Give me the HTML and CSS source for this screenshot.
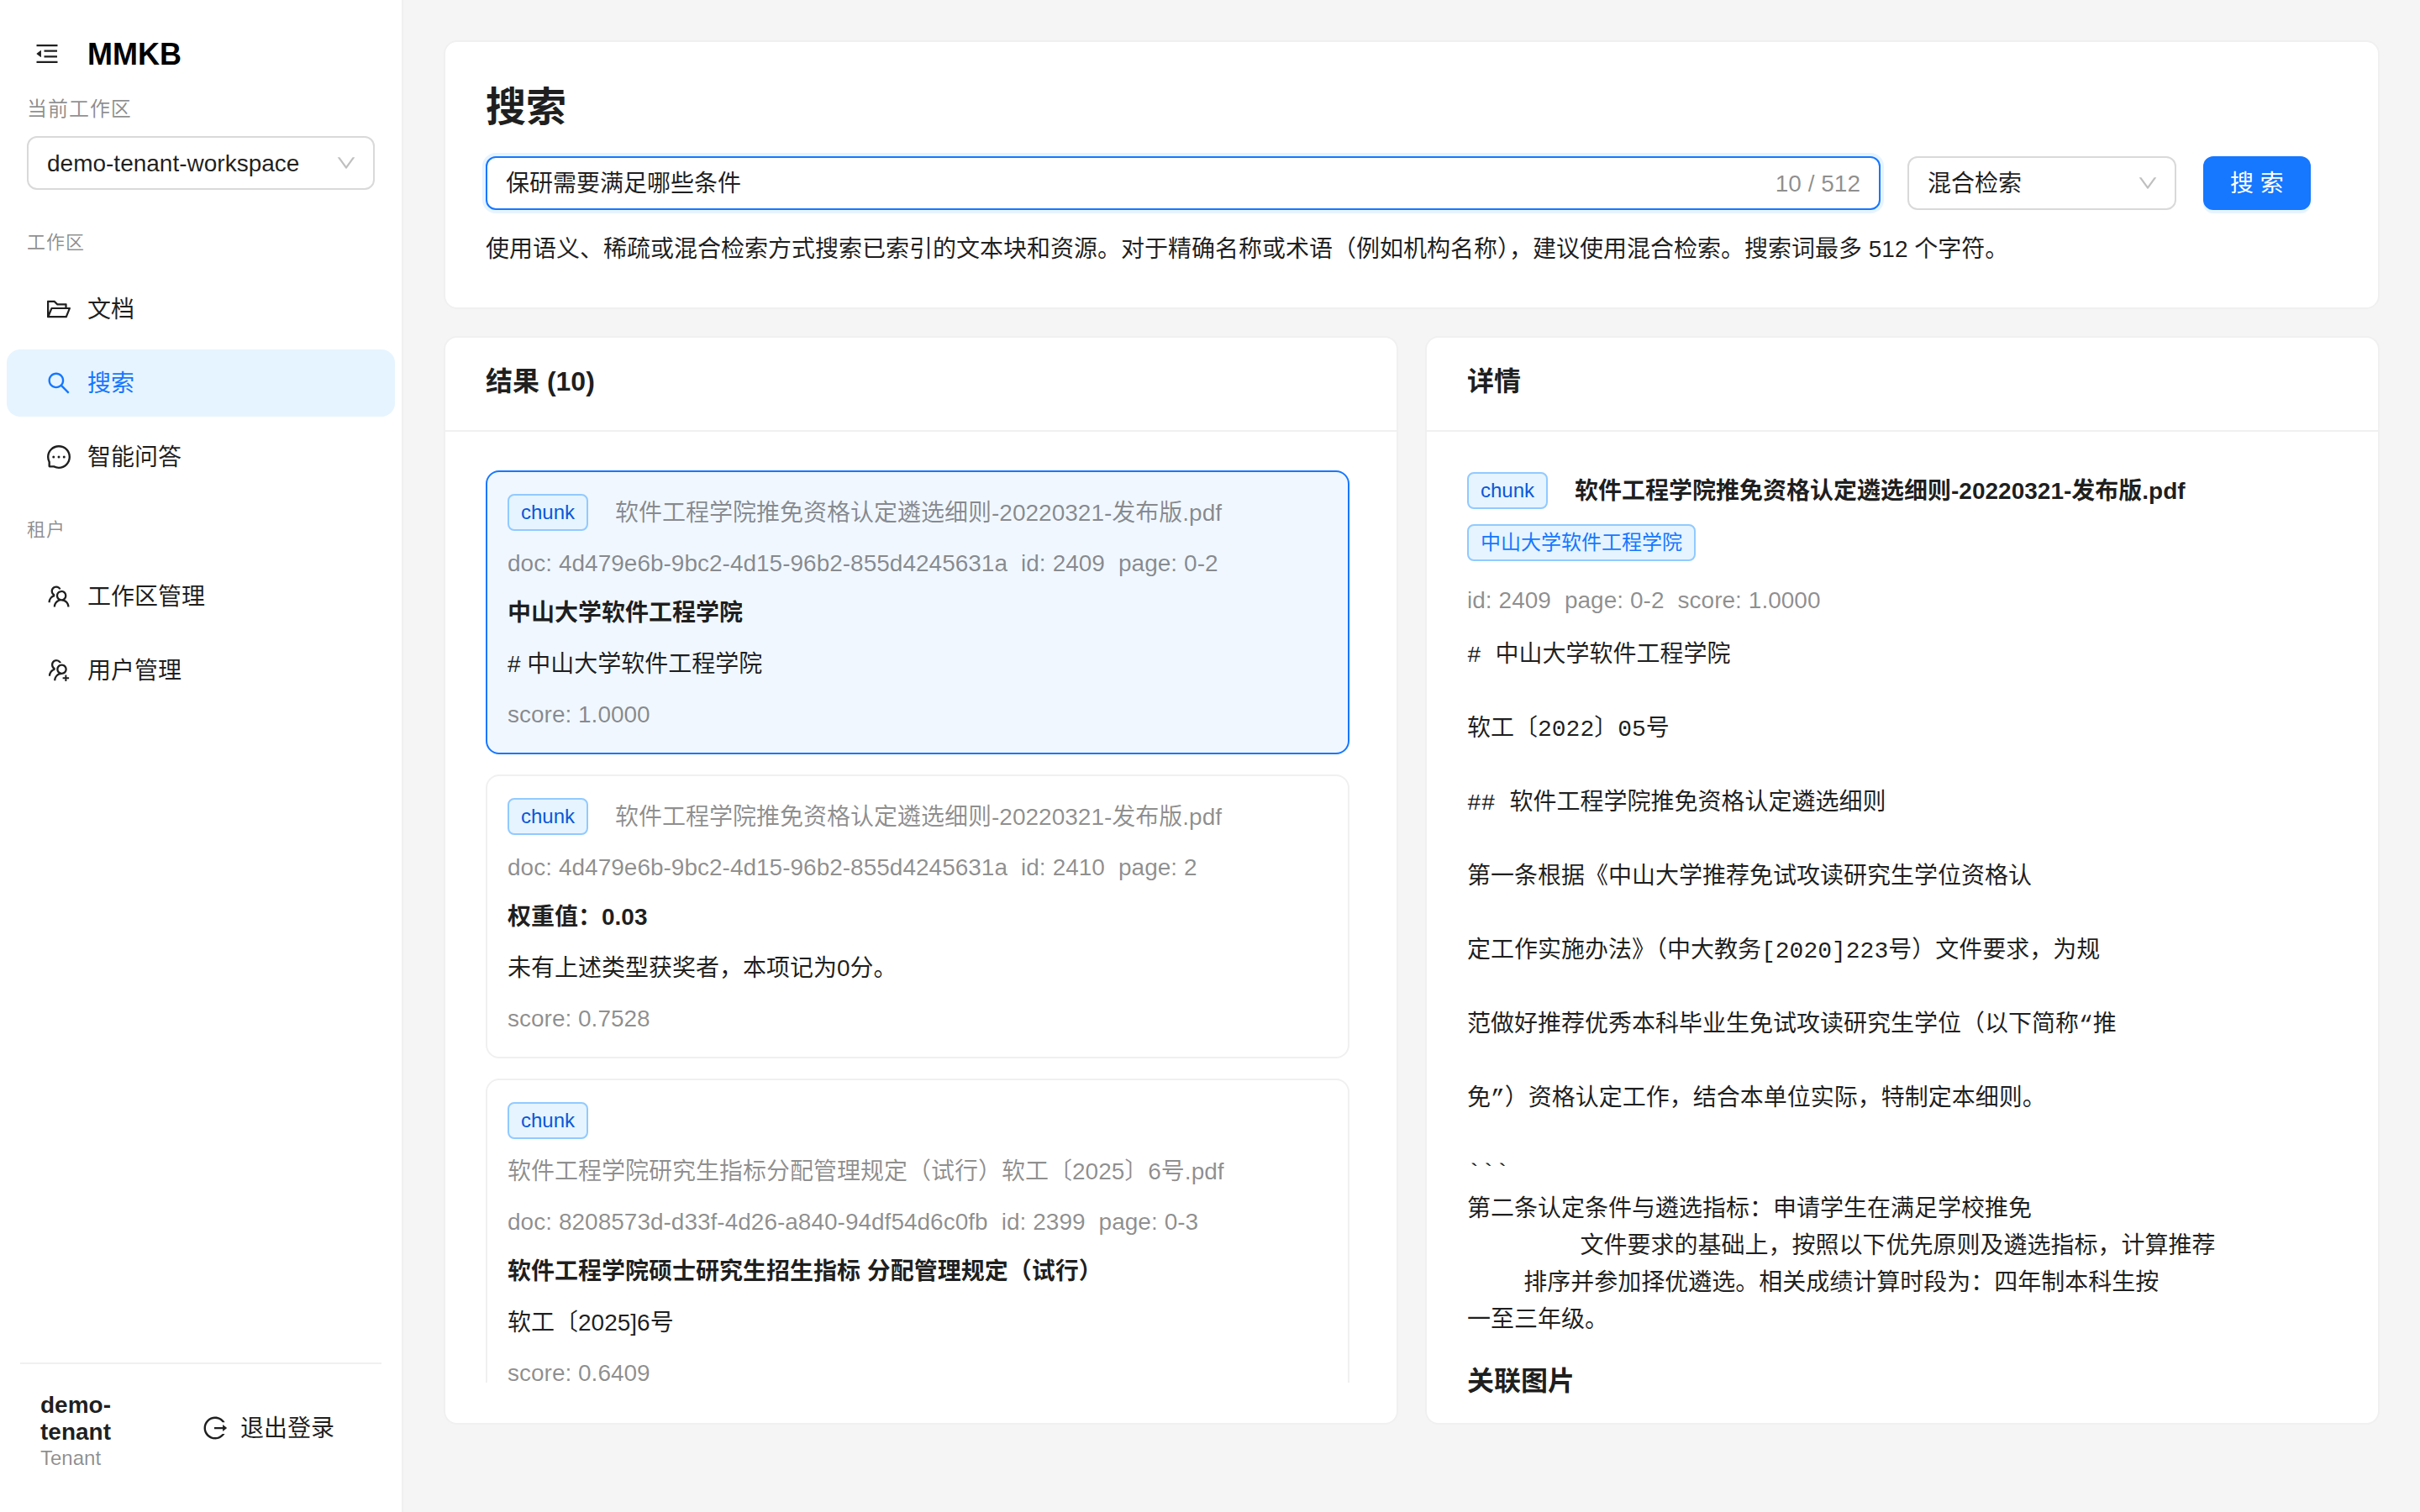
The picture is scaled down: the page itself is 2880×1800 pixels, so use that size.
FILE: index.html
```html
<!DOCTYPE html>
<html lang="zh-CN">
<head>
<meta charset="utf-8">
<title>MMKB</title>
<link rel="stylesheet" href="styles.css">
</head>
<body>
<div class="app">
  <aside class="sidebar">
    <div class="brand">
      <span class="fold"><svg class="icon" viewBox="64 64 896 896"><path d="M408 442h480c4.4 0 8-3.6 8-8v-56c0-4.4-3.6-8-8-8H408c-4.4 0-8 3.6-8 8v56c0 4.4 3.6 8 8 8zm-8 204c0 4.4 3.6 8 8 8h480c4.4 0 8-3.6 8-8v-56c0-4.4-3.6-8-8-8H408c-4.4 0-8 3.6-8 8v56zm504-486H120c-4.4 0-8 3.6-8 8v56c0 4.4 3.6 8 8 8h784c4.4 0 8-3.6 8-8v-56c0-4.4-3.6-8-8-8zm0 632H120c-4.4 0-8 3.6-8 8v56c0 4.4 3.6 8 8 8h784c4.4 0 8-3.6 8-8v-56c0-4.4-3.6-8-8-8zM115.4 518.9L271.7 642c5.8 4.6 14.4.5 14.4-6.9V388.9c0-7.4-8.5-11.5-14.4-6.9L115.4 505.1a8.74 8.74 0 0 0 0 13.8z"/></svg></span>
      <span class="brand-name">MMKB</span>
    </div>
    <div class="workspace">
      <div class="workspace-label">当前工作区</div>
      <div class="select">
        <span>demo-tenant-workspace</span>
        <svg class="arrow" viewBox="64 64 896 896"><path d="M884 256h-75c-5.1 0-9.9 2.5-12.9 6.6L512 654.2 227.9 262.6c-3-4.1-7.8-6.6-12.9-6.6h-75c-6.5 0-10.3 7.4-6.5 12.7l352.6 486.1c12.8 17.6 39 17.6 51.7 0l352.6-486.1c3.9-5.3.1-12.7-6.4-12.7z"/></svg>
      </div>
    </div>
    <nav class="menu">
      <div class="menu-group">工作区</div>
      <a class="menu-item"><svg class="icon" viewBox="64 64 896 896"><path d="M928 444H820V330.4c0-17.7-14.3-32-32-32H473L355.7 186.2a8.15 8.15 0 00-5.5-2.2H96c-17.7 0-32 14.3-32 32v592c0 17.7 14.3 32 32 32h698c13 0 24.8-7.9 29.7-20l134-332c1.5-3.8 2.3-7.9 2.3-12 0-17.7-14.3-32-32-32zM136 256h188.5l119.6 114.4H748V444H238c-13 0-24.8 7.9-29.7 20L136 643.2V256zm635.3 512H159l103.3-256h612.4L771.3 768z"/></svg><span>文档</span></a>
      <a class="menu-item active"><svg class="icon" viewBox="64 64 896 896"><path d="M909.6 854.5L649.9 594.8C690.2 542.7 712 479 712 412c0-80.2-31.3-155.4-87.9-212.1-56.6-56.7-132-87.9-212.1-87.9s-155.5 31.3-212.1 87.9C143.2 256.5 112 331.8 112 412c0 80.1 31.3 155.5 87.9 212.1C256.5 680.8 331.8 712 412 712c67 0 130.6-21.8 182.7-62l259.7 259.6a8.2 8.2 0 0011.6 0l43.6-43.5a8.2 8.2 0 000-11.6zM570.4 570.4C528 612.7 471.8 636 412 636s-116-23.3-158.4-65.6C211.3 528 188 471.8 188 412s23.3-116.1 65.6-158.4C296 211.3 352.2 188 412 188s116.1 23.2 158.4 65.6S636 352.2 636 412s-23.3 116.1-65.6 158.4z"/></svg><span>搜索</span></a>
      <a class="menu-item"><svg class="icon" viewBox="64 64 896 896"><path d="M464 512a48 48 0 1096 0 48 48 0 10-96 0zm200 0a48 48 0 1096 0 48 48 0 10-96 0zm-400 0a48 48 0 1096 0 48 48 0 10-96 0zm661.2-173.6c-22.6-53.7-55-101.9-96.3-143.3a444.35 444.35 0 00-143.3-96.3C630.6 75.7 572.2 64 512 64h-2c-60.6.3-119.3 12.3-174.5 35.9a445.35 445.35 0 00-142 96.5c-40.9 41.3-73 89.3-95.2 142.8-23 55.4-34.6 114.3-34.3 174.9A449.4 449.4 0 00112 714v152a46 46 0 0046 46h152.1A449.4 449.4 0 00510 960h2.1c59.9 0 118-11.6 172.7-34.3a444.48 444.48 0 00142.8-95.2c41.3-40.9 73.8-88.7 96.5-142 23.6-55.2 35.6-113.9 35.9-174.5.3-60.9-11.5-120-34.8-175.6zm-151.1 438C704 845.8 611 884 512 884h-1.7c-60.3-.3-120.2-15.3-173.1-43.5l-8.4-4.5H188V695.2l-4.5-8.4C155.3 633.9 140.3 574 140 513.7c-.4-99.7 37.7-193.3 107.6-263.8 69.8-70.5 163.1-109.5 262.8-109.9h1.7c50 0 98.5 9.7 144.2 28.9 44.6 18.7 84.6 45.6 119 80 34.3 34.3 61.3 74.4 80 119 19.4 46.2 29.1 95.2 28.9 145.8-.6 99.6-39.7 192.9-110.1 262.7z"/></svg><span>智能问答</span></a>
      <div class="menu-group">租户</div>
      <a class="menu-item"><svg class="icon" viewBox="64 64 896 896"><path d="M824.2 699.9a301.55 301.55 0 00-86.4-60.4C783.1 602.8 812 546.8 812 484c0-110.8-92.4-201.7-203.2-200-109.1 1.7-197 90.6-197 200 0 62.8 29 118.8 74.2 155.5a300.95 300.95 0 00-86.4 60.4C345 754.6 314 826.8 312 903.8a8 8 0 008 8.2h56c4.3 0 7.9-3.4 8-7.7 1.9-58 25.4-112.3 66.7-153.5A226.62 226.62 0 01612 684c60.9 0 118.2 23.7 161.3 66.8C814.6 792 838 846.3 840 904.3c.1 4.3 3.7 7.7 8 7.7h56a8 8 0 008-8.2c-2-77-33-149.2-87.8-203.9zM612 612c-34.2 0-66.4-13.3-90.5-37.5a126.86 126.86 0 01-37.5-91.8c.3-32.8 13.4-64.5 36.3-88 24-24.6 56.1-38.3 90.4-38.7 33.9-.3 66.8 12.9 91 36.6 24.8 24.3 38.4 56.8 38.4 91.4 0 34.2-13.3 66.3-37.5 90.5A127.3 127.3 0 01612 612zM361.5 510.4c-.9-8.7-1.4-17.5-1.4-26.4 0-15.9 1.5-31.4 4.3-46.5.7-3.6-1.2-7.3-4.5-8.8-13.6-6.1-26.1-14.5-36.9-25.1a127.54 127.54 0 01-38.7-95.4c.9-32.1 13.8-62.6 36.3-85.6 24.7-25.3 57.9-39.1 93.2-38.7 31.9.3 62.7 12.6 86 34.4 7.9 7.4 14.7 15.6 20.4 24.4 2 3.1 5.9 4.4 9.3 3.2 17.6-6.1 36.2-10.4 55.3-12.4 5.6-.6 8.8-6.6 6.3-11.6-32.5-64.3-98.9-108.7-175.7-109.9-110.9-1.7-203.3 89.2-203.3 199.9 0 62.8 28.9 118.8 74.2 155.5-31.8 14.7-61.1 35-86.5 60.4-54.8 54.7-85.8 126.9-87.8 204a8 8 0 008 8.2h56.1c4.3 0 7.9-3.4 8-7.7 1.9-58 25.4-112.3 66.7-153.5 29.4-29.4 65.4-49.8 104.7-59.7 3.9-1 6.5-4.7 6-8.7z"/></svg><span>工作区管理</span></a>
      <a class="menu-item"><svg class="icon" viewBox="64 64 896 896"><path d="M892 772h-80v-80c0-4.4-3.6-8-8-8h-48c-4.4 0-8 3.6-8 8v80h-80c-4.4 0-8 3.6-8 8v48c0 4.4 3.6 8 8 8h80v80c0 4.4 3.6 8 8 8h48c4.4 0 8-3.6 8-8v-80h80c4.4 0 8-3.6 8-8v-48c0-4.4-3.6-8-8-8zM373.5 498.4c-.9-8.7-1.4-17.5-1.4-26.4 0-15.9 1.5-31.4 4.3-46.5.7-3.6-1.2-7.3-4.5-8.8-13.6-6.1-26.1-14.5-36.9-25.1a127.54 127.54 0 01-38.7-95.4c.9-32.1 13.8-62.6 36.3-85.6 24.7-25.3 57.9-39.1 93.2-38.7 31.9.3 62.7 12.6 86 34.4 7.9 7.4 14.7 15.6 20.4 24.4 2 3.1 5.9 4.4 9.3 3.2 17.6-6.1 36.2-10.4 55.3-12.4 5.6-.6 8.8-6.6 6.3-11.6-32.5-64.3-98.9-108.7-175.7-109.9-110.8-1.7-203.2 89.2-203.2 200 0 62.8 28.9 118.8 74.2 155.5-31.8 14.7-61.1 35-86.5 60.4-54.8 54.7-85.8 126.9-87.8 204a8 8 0 008 8.2h56.1c4.3 0 7.9-3.4 8-7.7 1.9-58 25.4-112.3 66.7-153.5 29.4-29.4 65.4-49.8 104.7-59.7 3.8-1.1 6.4-4.8 5.9-8.8zM824 472c0-109.4-87.9-198.3-196.9-200C516.3 270.3 424 361.2 424 472c0 62.8 29 118.8 74.2 155.5a300.95 300.95 0 00-86.4 60.4C357 742.6 326 814.8 324 891.8a8 8 0 008 8.2h56c4.3 0 7.9-3.4 8-7.7 1.9-58 25.4-112.3 66.7-153.5C505.8 695.7 563 672 624 672c110.4 0 200-89.5 200-200zm-109.5 90.5C690.3 586.7 658.2 600 624 600s-66.3-13.3-90.5-37.5a127.26 127.26 0 01-37.5-91.8c.3-32.8 13.4-64.5 36.3-88 24-24.6 56.1-38.3 90.4-38.7 33.9-.3 66.8 12.9 91 36.6 24.8 24.3 38.4 56.8 38.4 91.4-.1 34.2-13.4 66.3-37.6 90.5z"/></svg><span>用户管理</span></a>
    </nav>
    <footer class="account">
      <div class="account-info">
        <div class="account-name">demo-tenant</div>
        <div class="account-role">Tenant</div>
      </div>
      <a class="logout"><svg class="icon" viewBox="64 64 896 896"><path d="M868 732h-70.3c-4.8 0-9.3 2.1-12.3 5.8-7 8.5-14.5 16.7-22.4 24.5a353.84 353.84 0 01-112.7 75.9A352.8 352.8 0 01512.4 866c-47.9 0-94.3-9.4-137.9-27.8a353.84 353.84 0 01-112.7-75.9 353.28 353.28 0 01-76-112.5C167.3 606.2 158 559.9 158 512s9.4-94.2 27.8-137.8c17.8-42.1 43.4-80 76-112.5s70.5-58.1 112.7-75.9c43.6-18.4 90-27.8 137.9-27.8 47.9 0 94.3 9.3 137.9 27.8 42.2 17.8 80.1 43.4 112.7 75.9 7.9 7.9 15.3 16.1 22.4 24.5 3 3.7 7.6 5.8 12.3 5.8H868c6.3 0 10.2-7 6.7-12.3C798 160.5 663.8 81.6 511.3 82 271.7 82.6 79.6 277.1 82 516.4 84.4 751.9 276.2 942 512.4 942c152.1 0 285.7-78.8 362.3-197.7 3.4-5.3-.4-12.3-6.7-12.3zm88.9-226.3L815 393.7c-5.3-4.2-13-.4-13 6.3v76H488c-4.4 0-8 3.6-8 8v56c0 4.4 3.6 8 8 8h314v76c0 6.7 7.8 10.5 13 6.3l141.9-112a8 8 0 000-12.6z"/></svg><span>退出登录</span></a>
    </footer>
  </aside>
  <main class="main">
    <section class="card search-card">
      <h3 class="page-title">搜索</h3>
      <div class="search-row">
        <div class="search-input"><span>保研需要满足哪些条件</span><span class="count">10 / 512</span></div>
        <div class="select mode">
          <span>混合检索</span>
          <svg class="arrow" viewBox="64 64 896 896"><path d="M884 256h-75c-5.1 0-9.9 2.5-12.9 6.6L512 654.2 227.9 262.6c-3-4.1-7.8-6.6-12.9-6.6h-75c-6.5 0-10.3 7.4-6.5 12.7l352.6 486.1c12.8 17.6 39 17.6 51.7 0l352.6-486.1c3.9-5.3.1-12.7-6.4-12.7z"/></svg>
        </div>
        <div class="submit">搜 索</div>
      </div>
      <div class="hint line">使用语义、稀疏或混合检索方式搜索已索引的文本块和资源。对于精确名称或术语（例如机构名称），建议使用混合检索。搜索词最多 512 个字符。</div>
    </section>
    <div class="columns">
      <section class="card panel">
        <header class="panel-head">结果 (10)</header>
        <div class="panel-body">
          <div class="results">
            <article class="result selected">
              <div class="result-head"><span class="tag">chunk</span><span class="line muted">软件工程学院推免资格认定遴选细则-20220321-发布版.pdf</span></div>
              <div class="line muted ids">doc: 4d479e6b-9bc2-4d15-96b2-855d4245631a&nbsp; id: 2409&nbsp; page: 0-2</div>
              <div class="strong">中山大学软件工程学院</div>
              <div class="line"># 中山大学软件工程学院</div>
              <div class="line muted">score: 1.0000</div>
            </article>
            <article class="result">
              <div class="result-head"><span class="tag">chunk</span><span class="line muted">软件工程学院推免资格认定遴选细则-20220321-发布版.pdf</span></div>
              <div class="line muted ids">doc: 4d479e6b-9bc2-4d15-96b2-855d4245631a&nbsp; id: 2410&nbsp; page: 2</div>
              <div class="strong">权重值：0.03</div>
              <div class="line">未有上述类型获奖者，本项记为0分。</div>
              <div class="line muted">score: 0.7528</div>
            </article>
            <article class="result">
              <div class="result-head"><span class="tag">chunk</span></div>
              <div class="line muted">软件工程学院研究生指标分配管理规定（试行）软工〔2025〕6号.pdf</div>
              <div class="line muted ids">doc: 8208573d-d33f-4d26-a840-94df54d6c0fb&nbsp; id: 2399&nbsp; page: 0-3</div>
              <div class="strong">软件工程学院硕士研究生招生指标 分配管理规定（试行）</div>
              <div class="line">软工〔2025]6号</div>
              <div class="line muted">score: 0.6409</div>
            </article>
          </div>
        </div>
      </section>
      <section class="card panel">
        <header class="panel-head">详情</header>
        <div class="panel-body detail">
          <div class="result-head"><span class="tag">chunk</span><span class="line strong">软件工程学院推免资格认定遴选细则-20220321-发布版.pdf</span></div>
          <div class="tag-row"><span class="tag topic">中山大学软件工程学院</span></div>
          <div class="line muted ids meta">id: 2409&nbsp; page: 0-2&nbsp; score: 1.0000</div>
          <pre class="content"># 中山大学软件工程学院

软工〔2022〕05号

## 软件工程学院推免资格认定遴选细则

第一条根据《中山大学推荐免试攻读研究生学位资格认

定工作实施办法》（中大教务[2020]223号）文件要求，为规

范做好推荐优秀本科毕业生免试攻读研究生学位（以下简称“推

免”）资格认定工作，结合本单位实际，特制定本细则。

&#96;&#96;&#96;
第二条认定条件与遴选指标：申请学生在满足学校推免
        文件要求的基础上，按照以下优先原则及遴选指标，计算推荐
    排序并参加择优遴选。相关成绩计算时段为：四年制本科生按
一至三年级。</pre>
          <h5 class="images-title">关联图片</h5>
        </div>
      </section>
    </div>
  </main>
</div>
</body>
</html>
```

FILE: styles.css
```css
*,
*::before,
*::after {
  box-sizing: border-box;
}

body {
  margin: 0;
  background: #f5f5f5;
  color: rgba(0, 0, 0, 0.88);
  font-family: "Liberation Sans", "Noto Sans CJK SC", sans-serif;
  font-size: 28px;
  line-height: 44px;
}

.app { display: flex; height: 1800px; }

/* Sidebar */
.sidebar {
  display: flex;
  flex-direction: column;
  flex: none;
  width: 480px;
  background: #fff;
  border-right: 2px solid #f0f0f0;
}

.icon { flex: none; width: 28px; height: 28px; fill: currentColor; }
.arrow { flex: none; width: 24px; height: 24px; fill: rgba(0, 0, 0, 0.25); }

.brand {
  display: flex;
  align-items: center;
  gap: 24px;
  height: 88px;
  padding: 40px 32px 0;
}
.fold { display: flex; align-items: center; justify-content: center; width: 48px; height: 48px; }
.brand-name { padding-top: 2px; color: #000; font-size: 36px; font-weight: 700; }

.workspace { padding: 20px 32px 0; }
.workspace-label {
  margin-bottom: 10px;
  color: rgba(0, 0, 0, 0.45);
  font-size: 24px;
  letter-spacing: 0.96px;
}

.select {
  display: flex;
  align-items: center;
  justify-content: space-between;
  height: 64px;
  padding: 0 20px 0 22px;
  background: #fff;
  border: 2px solid #d9d9d9;
  border-radius: 12px;
}

.select span,
.search-input span,
.menu-item span,
.logout span {
  padding-top: 2px;
}

.menu { flex: 1; padding-top: 20px; }
.menu-group {
  height: 78px;
  padding: 21px 32px 0;
  color: rgba(0, 0, 0, 0.45);
  font-size: 22px;
  letter-spacing: 1px;
}
.menu-item {
  display: flex;
  align-items: center;
  gap: 20px;
  height: 80px;
  margin: 4px 8px 8px;
  padding-left: 48px;
  border-radius: 16px;
}
.menu-item + .menu-group { margin-top: -4px; }
.menu-item + .menu-item { margin-top: 0; }
.menu-item.active { background: #e6f4ff; color: #1677ff; }

.account {
  display: flex;
  align-items: center;
  gap: 16px;
  height: 154px;
  margin: 0 24px 24px;
  padding: 0 24px;
  border-top: 2px solid #f0f0f0;
}
.account-info { flex: 1; min-width: 0; padding-top: 8px; }
.account-name { font-weight: 700; line-height: 32px; }
.account-role { color: rgba(0, 0, 0, 0.45); font-size: 24px; line-height: 30px; }
.logout { display: flex; align-items: center; gap: 16px; padding: 0 32px; }

/* Main area */
.main {
  display: flex;
  flex: 1;
  flex-direction: column;
  gap: 32px;
  min-width: 0;
  padding: 48px;
}

.card { flex: none; background: #fff; border: 2px solid #f0f0f0; border-radius: 16px; }

.search-card {
  display: flex;
  flex-direction: column;
  gap: 24px;
  height: 320px;
  padding: 48px;
}
.page-title { height: 64px; margin: 0; font-size: 48px; font-weight: 700; line-height: 60px; }
.search-row { display: flex; gap: 32px; }
.search-input {
  display: flex;
  justify-content: space-between;
  align-items: center;
  width: 1660px;
  height: 64px;
  padding: 0 22px;
  border: 2px solid #1677ff;
  border-radius: 12px;
  box-shadow: 0 0 0 4px rgba(5, 145, 255, 0.1);
}
.count { color: rgba(0, 0, 0, 0.45); }
.mode { width: 320px; }
.submit {
  height: 64px;
  padding: 1px 32px 0;
  background: #1677ff;
  border-radius: 12px;
  box-shadow: 0 4px 0 rgba(5, 145, 255, 0.1);
  color: #fff;
  line-height: 64px;
  white-space: nowrap;
}

.columns { display: grid; grid-template-columns: 1fr 1fr; gap: 32px; }

.panel { height: 1296px; }
.panel-head {
  height: 112px;
  padding: 28px 48px 0;
  border-bottom: 2px solid #f0f0f0;
  font-size: 32px;
  font-weight: 700;
  line-height: 48px;
}
.panel-body { padding: 46px 48px 0; }

.results {
  display: flex;
  flex-direction: column;
  gap: 24px;
  height: 1086px;
  padding-right: 8px;
  overflow: hidden;
}
.result {
  display: flex;
  flex: none;
  flex-direction: column;
  gap: 16px;
  padding: 24px;
  border: 2px solid #f0f0f0;
  border-radius: 16px;
}
.result.selected { background: #f0f7ff; border-color: #1677ff; }
.result-head { display: flex; gap: 32px; padding-top: 2px; }
.line { height: 44px; padding-top: 1px; }

.tag {
  height: 44px;
  padding: 0 14px;
  background: #e6f4ff;
  border: 2px solid #91caff;
  border-radius: 8px;
  color: #0958d9;
  font-size: 24px;
  line-height: 40px;
}
.tag.topic { color: #1677ff; }
.muted { color: rgba(0, 0, 0, 0.45); }
.strong { font-weight: 700; }
.ids { word-spacing: 0.25px; }

.tag-row { display: flex; margin-top: 18px; }
.meta { margin-top: 24px; }
.content {
  margin: 23px 0 0;
  font-family: "Liberation Mono", "Noto Sans CJK SC", monospace;
  font-size: 28px;
  line-height: 44px;
}
.images-title { margin: 25px 0 0; font-size: 32px; font-weight: 700; line-height: 48px; }
```
